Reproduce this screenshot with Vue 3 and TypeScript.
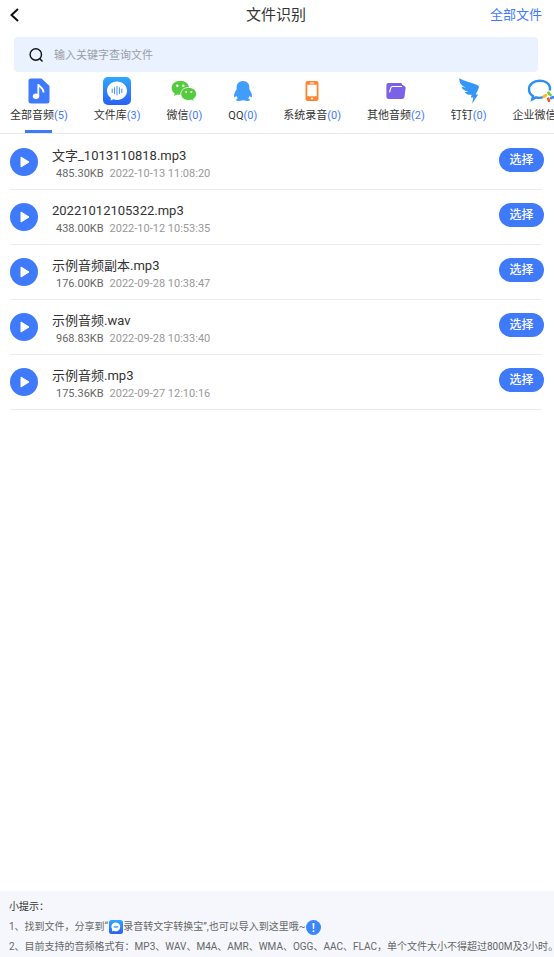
<script setup lang="ts">
import { ref, computed } from 'vue'

interface Tab {
  id: string
  label: string
  count: number
}

interface AudioFile {
  name: string
  size: string
  date: string
}

const tabs: Tab[] = [
  { id: 'all', label: '全部音频', count: 5 },
  { id: 'library', label: '文件库', count: 3 },
  { id: 'wechat', label: '微信', count: 0 },
  { id: 'qq', label: 'QQ', count: 0 },
  { id: 'system', label: '系统录音', count: 0 },
  { id: 'other', label: '其他音频', count: 2 },
  { id: 'dingtalk', label: '钉钉', count: 0 },
  { id: 'wecom', label: '企业微信', count: 0 },
]

const files: AudioFile[] = [
  { name: '文字_1013110818.mp3', size: '485.30KB', date: '2022-10-13 11:08:20' },
  { name: '20221012105322.mp3', size: '438.00KB', date: '2022-10-12 10:53:35' },
  { name: '示例音频副本.mp3', size: '176.00KB', date: '2022-09-28 10:38:47' },
  { name: '示例音频.wav', size: '968.83KB', date: '2022-09-28 10:33:40' },
  { name: '示例音频.mp3', size: '175.36KB', date: '2022-09-27 12:10:16' },
]

const activeTab = ref('all')
const keyword = ref('')
const visibleFiles = computed(() => files.filter((f) => f.name.includes(keyword.value.trim())))
</script>

<template>
  <div class="page">
    <header class="header">
      <button class="back" type="button" aria-label="返回">
        <svg width="10" height="14" viewBox="0 0 10 14" fill="none" stroke="#111" stroke-width="2">
          <path d="M8 1 1.500 7 8 13" />
        </svg>
      </button>
      <h1 class="title">文件识别</h1>
      <a class="all-files" href="#">全部文件</a>
    </header>

    <label class="search">
      <svg width="14" height="14" viewBox="0 0 14 14" fill="none" stroke="#111" stroke-width="1.400">
        <circle cx="6.800" cy="6.500" r="5.700" />
        <path d="m10.600 10.500 2.900 2.900" />
      </svg>
      <input v-model="keyword" type="text" aria-label="查询文件" placeholder="输入关键字查询文件" />
    </label>

    <nav class="tabs">
      <button
        v-for="tab in tabs"
        :key="tab.id"
        type="button"
        class="tab"
        :class="{ active: tab.id === activeTab }"
        @click="activeTab = tab.id"
      >
        <span class="tab-icon">
          <svg v-if="tab.id === 'all'" width="22" height="26" viewBox="0 0 22 26">
            <path d="M3 .5h10.500L21.500 8v15a2.500 2.500 0 0 1-2.500 2.500H3A2.500 2.500 0 0 1 .5 23V3A2.500 2.500 0 0 1 3 .5Z" fill="#3f7afb" />
            <ellipse cx="8" cy="18.300" rx="3.200" ry="2.700" fill="#fff" />
            <path d="M10.300 18.300V6.200c.6 2.900 5.600 3.500 5.200 8.300" fill="none" stroke="#fff" stroke-width="1.800" />
          </svg>
          <svg v-else-if="tab.id === 'library'" width="28" height="28" viewBox="0 0 28 28">
            <defs>
              <linearGradient id="libraryFill" x1="0" y1="0" x2="0" y2="1">
                <stop offset="0" stop-color="#2fa8ff" />
                <stop offset="1" stop-color="#2b5ff5" />
              </linearGradient>
            </defs>
            <rect width="28" height="28" rx="5" fill="url(#libraryFill)" />
            <path d="M14 4.500c5.600 0 10 4 10 9.200s-4.400 9.200-10 9.200c-1.300 0-2.500-.2-3.600-.6L7.600 23.500l.2-2.500C5.500 19.300 4 16.700 4 13.700c0-5.200 4.400-9.200 10-9.200Z" fill="#fff" />
            <path d="M9.200 12v3.500M11.600 10.700v6M14 9.500v8.500M16.400 10.700v6M18.800 12v3.500" stroke="#3d8cff" stroke-width="1" stroke-linecap="round" />
          </svg>
          <svg v-else-if="tab.id === 'wechat'" width="26" height="22" viewBox="0 0 26 22">
            <path d="M9.300.8C4.500.8.6 3.900.6 7.900c0 2.200 1.200 4.200 3.200 5.500L3 16l3.100-1.600c1 .3 2.100.4 3.200.4 4.800 0 8.700-3.100 8.700-6.900 0-4-3.900-7.100-8.700-7.100Z" fill="#56cb3f" />
            <path d="M17.700 7.400c-4.400 0-7.900 2.800-7.900 6.500s3.500 6.600 7.900 6.600c.9 0 1.800-.1 2.600-.4l2.800 1.400-.7-2.400c1.900-1.200 3.100-3 3.100-5.200 0-3.700-3.500-6.500-7.800-6.500Z" fill="#56cb3f" stroke="#fff" stroke-width=".8" />
            <g fill="#fff">
              <circle cx="6.300" cy="5.800" r="1.200" />
              <circle cx="12.300" cy="5.800" r="1.200" />
              <circle cx="15.200" cy="12" r="1" />
              <circle cx="20.300" cy="12" r="1" />
            </g>
          </svg>
          <svg v-else-if="tab.id === 'qq'" width="20" height="22" viewBox="0 0 20 22">
            <path d="M10 1c4 0 6.400 2.900 6.400 6.500v2c1.300 2 2.600 4.300 2.600 6.400 0 1.700-1 1.800-2.200-.2-.4 1-.9 1.800-1.600 2.500 1.100.5 1.600 1 1.600 1.700 0 1.400-4.800 1.400-6.800.2-2 1.200-6.800 1.200-6.800-.2 0-.7.500-1.200 1.600-1.700-.7-.7-1.200-1.500-1.600-2.500-1.200 2-2.200 1.900-2.200.2 0-2.100 1.300-4.400 2.600-6.400v-2C3.600 3.900 6 1 10 1Z" fill="#419dfb" />
          </svg>
          <svg v-else-if="tab.id === 'system'" width="14" height="20" viewBox="0 0 14 20">
            <rect x=".5" width="13" height="20" rx="2" fill="#fa8632" />
            <path d="M2.300 3.800h9.400v11.400H2.300zM5 1.600h4v.8H5z" fill="#fff" />
            <circle cx="7" cy="17.500" r="1.100" fill="#fff" />
          </svg>
          <svg v-else-if="tab.id === 'other'" width="20" height="18" viewBox="0 0 20 18">
            <path d="M2.500 1h11.700c1.200 0 2 .7 2.100 1.700L19 4.600c.5.300.7.800.6 1.400l-1.100 8.700c-.2 1.300-1.200 2.300-2.600 2.300H2.600A2.300 2.300 0 0 1 .4 14.700V3.200C.4 1.900 1.300 1 2.500 1Z" fill="#7b61e8" />
            <path d="M3.500 10.300 4.600 6.300c.3-1.300 1-1.800 2.100-1.800H16" fill="none" stroke="#fff" stroke-width="1.200" />
          </svg>
          <svg v-else-if="tab.id === 'dingtalk'" width="22" height="26" viewBox="0 0 22 26">
            <path d="M1.200.3c5.200 3.200 11.700 4 18 6.700 1.700.8 2 1.800 1.500 3.100-.7 2.100-1.900 4.400-3 6.300h2.500l-6.100 9.300 1.200-6.200h-2.600l1-2.800c-3.200.4-6-.6-7.200-3 1.600.4 2.800.4 4 .2-3.600-.8-6.300-2.500-7.200-5.300 1.700.8 3.300 1.100 4.800 1.100C4.300 8.200 1.500 6.200 1.200.3Z" fill="#3296fa" />
          </svg>
          <svg v-else width="30" height="24" viewBox="0 0 30 24">
            <path d="M22.700 11.500c.3-1 .4-2 .3-3C22.400 4.300 18 1.800 12.500 1.800 6.500 1.800 2 5.400 2 10.200c0 2.900 1.500 5.300 4 6.900l-.8 3.300 3.900-2c2.300.7 4.600.6 6.900-.2" fill="none" stroke="#2f8df5" stroke-width="2.400" />
            <g stroke-width="2.800" stroke-linecap="round">
              <path d="M21.500 13.800c.3 1 .9 1.600 2 2" stroke="#75c83c" />
              <path d="m16.800 17.500 2.200-1.300" stroke="#fcb923" />
              <path d="m22 21.800-.8-2" stroke="#f35b34" />
              <path d="m26 18.200-1.800.8" stroke="#2f8df5" />
            </g>
          </svg>
        </span>
        <span class="tab-label">{{ tab.label }}<span class="count">({{ tab.count }})</span></span>
      </button>
    </nav>

    <main class="content">
      <ul class="files">
        <li v-for="file in visibleFiles" :key="file.name" class="file">
          <button class="play" type="button" :aria-label="'播放 ' + file.name">
            <svg width="10" height="12" viewBox="0 0 10 12">
              <path d="M1 1v10l8-5Z" fill="#fff" stroke="#fff" stroke-linejoin="round" />
            </svg>
          </button>
          <div class="info">
            <span class="name">{{ file.name }}</span>
            <span class="meta">
              <span class="size">{{ file.size }}</span>
              <span class="date">{{ file.date }}</span>
            </span>
          </div>
          <button class="choose" type="button">选择</button>
        </li>
      </ul>
    </main>

    <footer class="tips">
      <p class="tips-title">小提示：</p>
      <p class="tip">
        <span>1、找到文件，分享到“</span>
        <svg class="app-icon" width="14" height="14" viewBox="0 0 14 14">
          <defs>
            <linearGradient id="appFill" x1="0" y1="0" x2="0" y2="1">
              <stop offset="0" stop-color="#2fa8ff" />
              <stop offset="1" stop-color="#2b5ff5" />
            </linearGradient>
          </defs>
          <rect width="14" height="14" rx="2.500" fill="url(#appFill)" />
          <path d="M7 2.500a4.400 4.400 0 1 1-2.400 8.200l-1.700.8.300-1.900A4.400 4.400 0 0 1 7 2.500Z" fill="#fff" />
          <path d="M5.400 6.300v1.200M7 5.700v2.400M8.600 6.300v1.200" stroke="#3d8cff" stroke-width="1.300" />
        </svg>
        <span>录音转文字转换宝”,也可以导入到这里哦~</span>
        <svg width="15" height="15" viewBox="0 0 15 15">
          <circle cx="7.500" cy="7.500" r="7.500" fill="#3a86fb" />
          <path d="M6.500 3h2l-.4 6H6.900Z" fill="#fff" />
          <circle cx="7.500" cy="11.300" r="1" fill="#fff" />
        </svg>
      </p>
      <p class="tip">2、目前支持的音频格式有：MP3、WAV、M4A、AMR、WMA、OGG、AAC、FLAC，单个文件大小不得超过800M及3小时<span class="stop">。</span></p>
    </footer>
  </div>
</template>

<style>
body {
  margin: 0;
  background: #fff;
}
</style>

<style scoped>
.page {
  display: flex;
  flex-direction: column;
  min-height: 100vh;
  overflow: hidden;
  color: #333;
  font-family: Roboto, "Noto Sans CJK SC", sans-serif;
}

button {
  padding: 0;
  border: 0;
  background: none;
  color: inherit;
  font: inherit;
  cursor: pointer;
}

svg {
  display: block;
  flex: none;
}

.header {
  display: grid;
  grid-template-columns: 1fr auto 1fr;
  align-items: center;
  height: 29px;
  padding: 0 12px 0 10px;
}

.back {
  justify-self: start;
}

.title {
  margin: 0;
  font-size: 15px;
  font-weight: 400;
  line-height: 24px;
}

.all-files {
  justify-self: end;
  color: #3f7afb;
  font-size: 13px;
  line-height: 24px;
  text-decoration: none;
}

.search {
  display: flex;
  align-items: center;
  gap: 11px;
  height: 35px;
  margin: 8px 16px 0 14px;
  padding: 0 15px;
  border-radius: 4px;
  background: #ebf2ff;
}

.search input {
  flex: 1;
  min-width: 0;
  padding: 2px 0 0;
  border: 0;
  outline: 0;
  background: none;
  color: #333;
  font: inherit;
  font-size: 11px;
}

.search input::placeholder {
  color: #999da6;
}

.tabs {
  display: flex;
  flex: none;
  gap: 26px;
  height: 61px;
  padding: 0 0 0 10px;
  border-bottom: 1px solid #e9e9e9;
  overflow: hidden;
}

.tab {
  display: flex;
  flex: none;
  flex-direction: column;
  align-items: center;
  padding-top: 4px;
}

.tab-icon {
  display: flex;
  align-items: center;
  height: 29px;
}

.tab-label {
  padding-top: 1px;
  font-size: 11px;
  line-height: 20px;
  white-space: nowrap;
}

.count {
  color: #3f7afb;
}

.tab.active::after {
  width: 27px;
  height: 3px;
  margin-top: 4px;
  background: #3f7afb;
  content: "";
}

.content {
  flex: 1;
}

.files {
  margin: 0;
  padding: 1px 12px 0 10px;
  list-style: none;
}

.file {
  display: flex;
  align-items: center;
  height: 54px;
  border-bottom: 1px solid #ececec;
}

.play {
  display: grid;
  flex: none;
  place-items: center;
  width: 28px;
  height: 28px;
  padding-left: 2px;
  border-radius: 50%;
  background: #3f7afb;
}

.info {
  display: flex;
  flex: 1;
  flex-direction: column;
  min-width: 0;
  padding: 6px 0 0 14px;
}

.name {
  font-size: 13px;
  line-height: 18px;
}

.meta {
  display: flex;
  gap: 6px;
  padding-left: 4px;
  font-size: 11px;
  line-height: 18px;
}

.size {
  color: #666;
}

.date {
  color: #999;
}

.choose {
  flex: none;
  width: 45px;
  height: 24px;
  margin: 0 -2px 4px 0;
  border-radius: 12px;
  background: #3f7afb;
  color: #fff;
  font-size: 12px;
  font-weight: 500;
  line-height: 24px;
}

.tips {
  padding: 6px 0 0 9px;
  background: #f5f7fc;
  color: #666;
  font-size: 10px;
  line-height: 20px;
}

.tips p {
  margin: 0;
}

.tips .tips-title {
  color: #333;
}

.tip {
  display: flex;
  align-items: center;
  white-space: nowrap;
}

.app-icon {
  margin-left: 1px;
}

.stop {
  font-feature-settings: "halt";
}
</style>
